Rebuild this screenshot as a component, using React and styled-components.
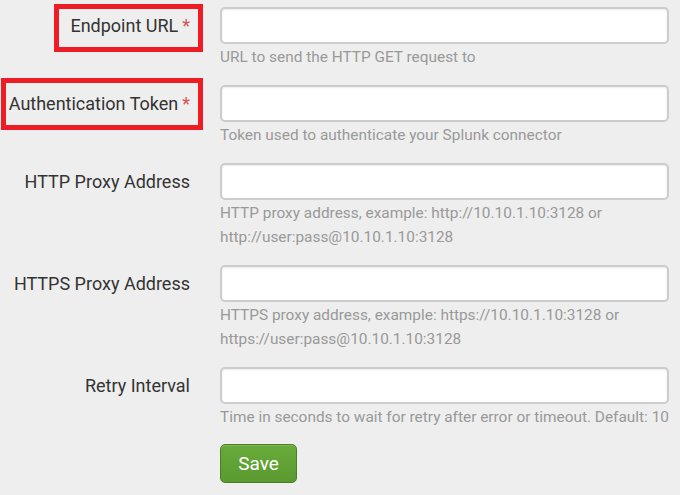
import styled, { createGlobalStyle } from "styled-components";

const Global = createGlobalStyle`
  body {
    margin: 0;
    background: #eeeeee;
    font-family: Roboto, "Liberation Sans", Arial, sans-serif;
  }
`;

const Form = styled.form`
  display: grid;
  grid-template-columns: 190px 449px;
  column-gap: 30px;
  row-gap: 16px;
  padding-top: 7px;
`;

const Label = styled.label`
  justify-self: end;
  position: relative;
  height: 37px;
  line-height: 37px;
  font-size: 18px;
  color: #333;
  white-space: nowrap;

  ${(p) =>
    p.$box &&
    `
    &::after {
      content: "";
      position: absolute;
      top: ${p.$box.top}px;
      bottom: ${p.$box.bottom}px;
      left: ${p.$box.left}px;
      right: -13px;
      border: 5px solid #ee1c25;
      pointer-events: none;
    }
  `}
`;

const Required = styled.span`
  color: #d9534f;
  margin-left: 4px;
`;

const Field = styled.div`
  display: flex;
  flex-direction: column;
`;

const Input = styled.input`
  box-sizing: border-box;
  width: 100%;
  height: 37px;
  border: 2px solid #cccccc;
  border-radius: 5px;
  background: #fff;
  box-shadow: inset 0 1px 2px rgba(0, 0, 0, 0.08);
  font: inherit;
  padding: 0 8px;
  margin: 0 0 1px;
  outline: none;
`;

const Help = styled.div`
  font-size: 15.4px;
  line-height: 24px;
  color: #999;
  white-space: nowrap;
`;

const SaveButton = styled.button`
  grid-column: 2;
  justify-self: start;
  margin-top: -1px;
  width: 77px;
  height: 39px;
  border: 1px solid #4a7f2a;
  border-radius: 5px;
  background: linear-gradient(#69ab3a, #5a9a30);
  color: #fff;
  font-family: inherit;
  font-size: 19px;
  cursor: pointer;
  box-shadow: inset 0 1px 0 rgba(255, 255, 255, 0.15);
`;

const fields = [
  {
    label: "Endpoint URL",
    required: true,
    box: { top: -3, bottom: -8, left: -16 },
    help: ["URL to send the HTTP GET request to"],
  },
  {
    label: "Authentication Token",
    required: true,
    box: { top: -7, bottom: -8, left: -8 },
    help: ["Token used to authenticate your Splunk connector"],
  },
  {
    label: "HTTP Proxy Address",
    help: [
      "HTTP proxy address, example: http://10.10.1.10:3128 or",
      "http://user:pass@10.10.1.10:3128",
    ],
  },
  {
    label: "HTTPS Proxy Address",
    help: [
      "HTTPS proxy address, example: https://10.10.1.10:3128 or",
      "https://user:pass@10.10.1.10:3128",
    ],
  },
  {
    label: "Retry Interval",
    help: ["Time in seconds to wait for retry after error or timeout. Default: 10"],
  },
];

export default function App() {
  return (
    <>
      <Global />
      <Form onSubmit={(e) => e.preventDefault()}>
        {fields.map((f) => (
          <>
            <Label key={f.label + "-l"} $box={f.box}>
              {f.label}
              {f.required && <Required>*</Required>}
            </Label>
            <Field key={f.label + "-f"}>
              <Input type="text" />
              {f.help.map((line) => (
                <Help key={line}>{line}</Help>
              ))}
            </Field>
          </>
        ))}
        <SaveButton type="submit">Save</SaveButton>
      </Form>
    </>
  );
}
